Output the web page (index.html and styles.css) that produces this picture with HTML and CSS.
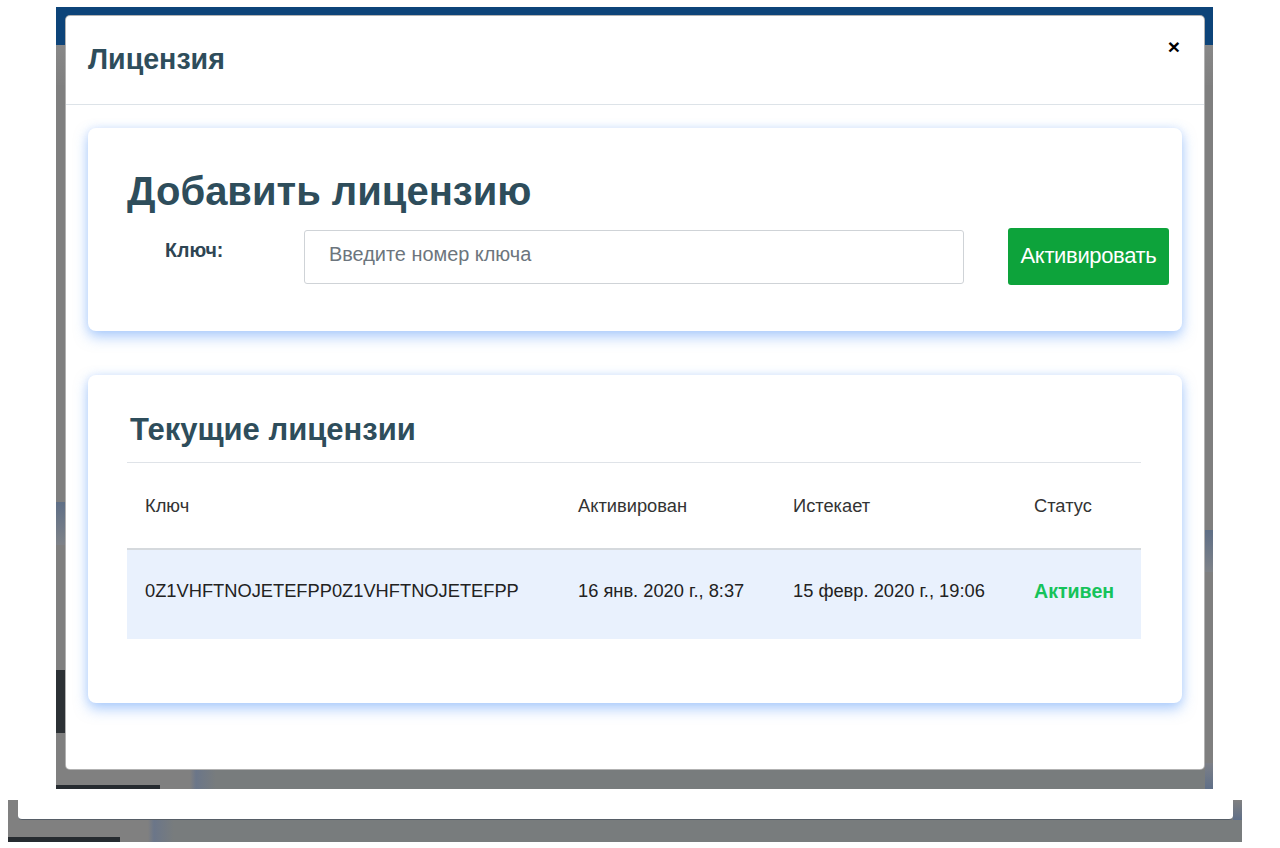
FILE: index.html
```html
<!DOCTYPE html>
<html lang="ru">
<head>
<meta charset="utf-8">
<title>Лицензия</title>
<link rel="stylesheet" href="styles.css">
</head>
<body>
<div class="shot">
  <div class="modal">
    <div class="modal-header">
      <h2 class="modal-title">Лицензия</h2>
      <button class="close" type="button">×</button>
    </div>
    <div class="modal-body">
      <section class="card add-card">
        <h1 class="add-title">Добавить лицензию</h1>
        <div class="key-row">
          <label class="key-label" for="key">Ключ:</label>
          <input class="key-input" id="key" type="text" placeholder="Введите номер ключа">
          <button class="btn-activate" type="button">Активировать</button>
        </div>
      </section>
      <section class="card list-card">
        <h2 class="list-title">Текущие лицензии</h2>
        <table class="lic-table">
          <thead>
            <tr>
              <th class="col-key">Ключ</th>
              <th class="col-act">Активирован</th>
              <th class="col-exp">Истекает</th>
              <th class="col-st">Статус</th>
            </tr>
          </thead>
          <tbody>
            <tr>
              <td>0Z1VHFTNOJETEFPP0Z1VHFTNOJETEFPP</td>
              <td>16 янв. 2020 г., 8:37</td>
              <td>15 февр. 2020 г., 19:06</td>
              <td class="status">Активен</td>
            </tr>
          </tbody>
        </table>
      </section>
    </div>
  </div>
</div>
<div class="shot2"><div class="shot2-inner"></div></div>
</body>
</html>
```

FILE: styles.css
```css
html, body {
  margin: 0;
  padding: 0;
  background: #ffffff;
}

body {
  width: 1280px;
  height: 848px;
  overflow: hidden;
  font-family: "Liberation Sans", Arial, sans-serif;
}

/* dimmed application behind the dialog */
.shot {
  box-sizing: border-box;
  width: 1157px;
  height: 782px;
  margin: 7px 0 0 56px;
  padding: 8px 8px 0 9px;
  background:
    linear-gradient(#0d4479, #0d4479) 0 0 / 100% 38px no-repeat,
    linear-gradient(#2c3135, #2c3135) 0 663px / 9px 63px no-repeat,
    linear-gradient(#5f6f86, #7e8288) 0 495px / 9px 43px no-repeat,
    linear-gradient(#5f6f86, #7e8288) 100% 523px / 8px 42px no-repeat,
    linear-gradient(#7d8087, #5f6f88) 100% 756px / 8px 26px no-repeat,
    linear-gradient(#262b30, #262b30) 0 778px / 104px 4px no-repeat,
    linear-gradient(to right, #808080 0 134px, #6b7689 140px, #787c7d 160px) 0 763px / 100% 19px no-repeat,
    linear-gradient(#888888, #808080) 0 38px / 100% 40px no-repeat,
    #7f7f7f;
}

.modal {
  box-sizing: border-box;
  width: 1140px;
  height: 755px;
  background: #ffffff;
  border: 1px solid rgba(0, 0, 0, 0.3);
  border-radius: 5px;
  display: flex;
  flex-direction: column;
}

.modal-header {
  box-sizing: border-box;
  height: 89px;
  border-bottom: 1px solid #dde3e8;
  display: flex;
  align-items: center;
  justify-content: space-between;
  padding: 0 24px 3px 22px;
}

.modal-title {
  margin: 0;
  font-size: 28.6px;
  line-height: 34px;
  font-weight: bold;
  color: #2e4d5b;
}

.close {
  align-self: flex-start;
  margin-top: 20px;
  padding: 0;
  border: 0;
  background: none;
  font-family: "Liberation Sans", Arial, sans-serif;
  font-size: 21px;
  line-height: 22px;
  font-weight: bold;
  color: #000;
}

.modal-body {
  padding: 23px 22px 0 22px;
  display: flex;
  flex-direction: column;
  gap: 44px;
}

.card {
  background: #ffffff;
  border-radius: 8px;
  box-shadow: 0 6px 14px rgba(100, 160, 250, 0.5), 0 0 9px rgba(150, 190, 250, 0.28);
}

.add-card {
  padding: 39px 13px 46px 39px;
}

.add-title {
  margin: 0 0 13px 0;
  font-size: 40px;
  line-height: 48px;
  font-weight: bold;
  color: #2e4d5b;
}

.key-row {
  display: flex;
  align-items: center;
  height: 57px;
}

.key-label {
  box-sizing: border-box;
  width: 177px;
  padding-left: 38px;
  align-self: flex-start;
  margin-top: 11px;
  font-size: 19.6px;
  line-height: 22px;
  font-weight: bold;
  color: #2e4553;
}

.key-input {
  box-sizing: border-box;
  width: 660px;
  height: 54px;
  padding: 0 0 4px 24px;
  border: 1px solid #cfd3d7;
  border-radius: 3px;
  font-family: "Liberation Sans", Arial, sans-serif;
  font-size: 19.9px;
  color: #333;
  outline: none;
}

.key-input::placeholder {
  color: #6c757d;
}

.btn-activate {
  box-sizing: border-box;
  margin-left: 44px;
  width: 161px;
  height: 57px;
  padding: 0 0 2px 0;
  border: 0;
  border-radius: 3px;
  background: #0da33b;
  color: #ffffff;
  font-family: "Liberation Sans", Arial, sans-serif;
  font-size: 22px;
  letter-spacing: -0.35px;
}

.list-card {
  padding: 37px 41px 64px 39px;
}

.list-title {
  margin: 0;
  padding: 0 0 14px 3px;
  border-bottom: 1px solid #dfe3e8;
  font-size: 31px;
  line-height: 36px;
  font-weight: bold;
  color: #2e4d5b;
}

.lic-table {
  width: 1014px;
  border-collapse: collapse;
  table-layout: fixed;
  font-size: 18.3px;
}

.lic-table th,
.lic-table td {
  padding: 0 0 0 18px;
  text-align: left;
  white-space: nowrap;
}

.lic-table th {
  height: 85px;
  font-weight: normal;
  color: #333;
  border-bottom: 2px solid #d5d9dd;
}

.lic-table td {
  height: 90px;
  padding-bottom: 7px;
  box-sizing: border-box;
  color: #222;
  background: #e9f1fd;
}

.col-key { width: 415px; }
.col-act { width: 197px; }
.col-exp { width: 223px; }
.col-st { width: 107px; }

.lic-table td.status {
  font-size: 19.6px;
  font-weight: bold;
  color: #16c35a;
}

/* lower slice of a second capture */
.shot2 {
  box-sizing: border-box;
  width: 1234px;
  height: 42px;
  margin: 11px 0 0 8px;
  padding: 0 9px 0 10px;
  background:
    linear-gradient(#262b30, #262b30) 0 37px / 112px 5px no-repeat,
    linear-gradient(#808080, #5f6f88) 100% 0 / 9px 20px no-repeat,
    linear-gradient(to right, #808080 0 140px, #6b7689 146px, #787c7d 166px);
}

.shot2-inner {
  height: 19px;
  background: #ffffff;
  border-bottom: 1px solid #565d66;
  border-radius: 0 0 4px 4px;
}
```
